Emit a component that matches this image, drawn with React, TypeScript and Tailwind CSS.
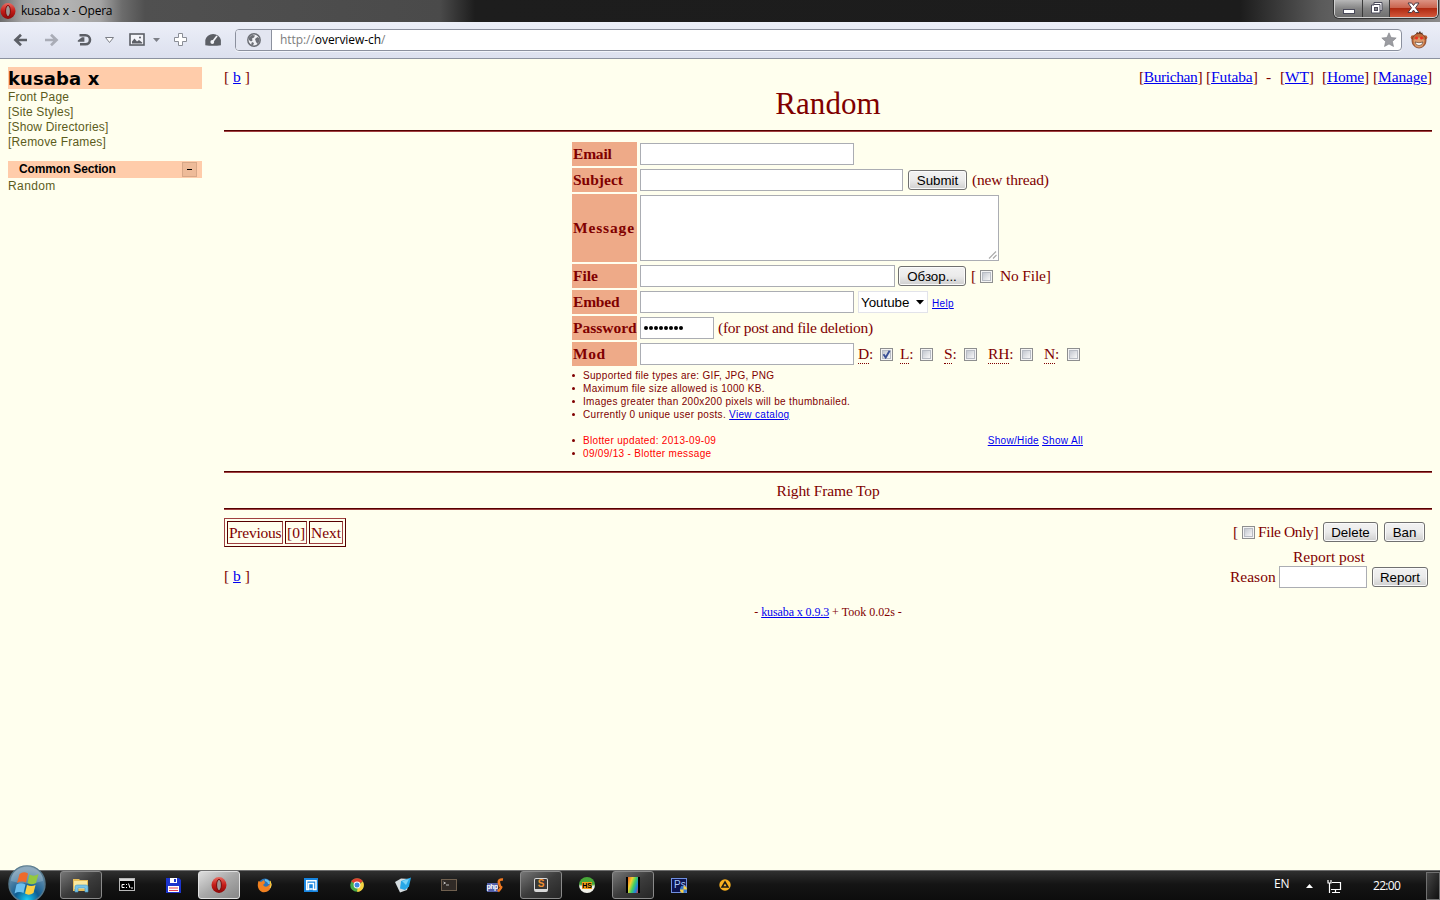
import React from "react";

const link = "text-[#0000ee] underline decoration-1 underline-offset-1";
const field = "shrink-0 rounded-none border border-[#abadb3] bg-white outline-none";

function Box({ checked = false }: { checked?: boolean }) {
  return (
    <span className="flex h-[13px] w-[13px] shrink-0 border border-[#8e8f8f] bg-[#f4f4f4] p-px">
      <span className="h-[9px] w-[9px] border border-[#b8bcc4] bg-linear-to-br from-[#c4c8d0] to-[#f8f8f8]">
        {checked && (
          <svg viewBox="0 0 9 9" className="-mt-px -ml-px h-[9px] w-[9px]">
            <path d="M1.5 4.2 L3.7 7.5 L7.6 0.8" fill="none" stroke="#3a4f96" strokeWidth="1.9" />
          </svg>
        )}
      </span>
    </span>
  );
}

function Btn({ children, className }: { children: React.ReactNode; className: string }) {
  return (
    <button
      className={
        "flex h-[20px] shrink-0 items-center justify-center rounded-[3px] border border-[#707070] bg-linear-to-b from-[#f2f2f2] from-0% via-[#ebebeb] via-50% to-[#cfcfcf] pt-px font-['Liberation_Sans',sans-serif] text-[13.33px] whitespace-nowrap text-black shadow-[inset_0_0_0_1px_#fafafa] " +
        className
      }
    >
      {children}
    </button>
  );
}

function Row({
  label,
  labelClass = "",
  tall = false,
  children,
}: {
  label: string;
  labelClass?: string;
  tall?: boolean;
  children: React.ReactNode;
}) {
  return (
    <div className={"mb-[2px] flex " + (tall ? "h-[68px]" : "h-[24px]")}>
      <div
        className={
          "mr-[3px] flex w-[65px] shrink-0 items-center bg-[#eeaa88] pl-px text-[15.5px] font-bold whitespace-nowrap " +
          labelClass
        }
      >
        {label}
      </div>
      <div className="flex items-center whitespace-nowrap">{children}</div>
    </div>
  );
}

function Rule() {
  return <div className="h-[2px] shrink-0 border-t border-b border-t-[#560000] border-b-[#a04040]" />;
}

function Flag({ text, className }: { text: string; className: string }) {
  return (
    <span className={"flex h-[20px] shrink-0 items-start leading-[20px] tracking-[-0.2px] " + className}>
      <span className="h-[20px] border-b border-dotted border-[#800000]">{text}</span>:
    </span>
  );
}

function Bullet({ children, red = false }: { children: React.ReactNode; red?: boolean }) {
  return (
    <li className="flex h-[13px] items-center whitespace-nowrap">
      <span className="mr-[8px] h-[3px] w-[3px] rounded-full bg-[#800000]" />
      <span className={red ? "text-[#ff0000]" : ""}>{children}</span>
    </li>
  );
}

function OperaIcon({ size }: { size: number }) {
  return (
    <svg width={size} height={size} viewBox="0 0 16 16">
      <defs>
        <linearGradient id="op" x1="0" y1="0" x2="0" y2="1">
          <stop offset="0" stopColor="#e86a60" />
          <stop offset="0.5" stopColor="#c41c18" />
          <stop offset="1" stopColor="#8c0808" />
        </linearGradient>
      </defs>
      <ellipse cx="8" cy="8" rx="7.5" ry="7.9" fill="url(#op)" />
      <ellipse cx="8" cy="8" rx="2.4" ry="5.6" fill="#a09896" stroke="#7c0a0a" strokeWidth="1" />
    </svg>
  );
}

function TitleBar() {
  return (
    <header className="flex h-[22px] shrink-0 justify-between bg-[linear-gradient(90deg,#6c6c6c_0px,#a4a4a4_22px,#b6b6b6_60px,#a4a4a4_100px,#6c6c6c_122px,#505050_145px,#4a4a4a_440px,#1d1d1d_475px,#1c1c1c_1240px,#5a5a5a_1320px,#8a8a8a_1440px)]">
      <div className="flex items-center">
        <OperaIcon size={16} />
        <span className="ml-[5px] font-['Open_Sans',sans-serif] text-[12px] tracking-[-0.2px] text-black">kusaba x - Opera</span>
      </div>
      <div className="mr-[2px] flex h-[18px] overflow-hidden rounded-b-[5px] border border-t-0 border-[#d0d0d0] shadow-[0_0_0_1px_#333]">
        <div className="flex w-[28px] items-center justify-center border-r border-[#3a3a3a] bg-linear-to-b from-[#b8b8b8] via-[#858585] to-[#6f6f6f]">
          <svg width="12" height="16"><rect x="0.5" y="8.5" width="11" height="4" fill="#fff" stroke="#4a4a5a" /></svg>
        </div>
        <div className="flex w-[27px] items-center justify-center border-r border-[#3a3a3a] bg-linear-to-b from-[#b8b8b8] via-[#858585] to-[#6f6f6f]">
          <svg width="13" height="14" className="mb-[2px]">
            <path d="M4 1.5h8v8h-2v2.500H1.5v-8H4z" fill="#fff" stroke="#4a4a5a" />
            <path d="M4 3.500h6v6" fill="none" stroke="#4a4a5a" />
            <rect x="4.500" y="6.500" width="3" height="3" fill="#888" stroke="#4a4a5a" />
          </svg>
        </div>
        <div className="flex w-[47px] items-center justify-center bg-[linear-gradient(180deg,#dc9384_0%,#c9614c_48%,#b02a12_50%,#d2573a_100%)]">
          <svg width="13" height="12" viewBox="0 0 13 12" className="mb-[2px]">
            <path d="M1 1h3.6l1.9 2.5L8.4 1H12L8.5 5.8 12 10.5H8.4L6.5 8.1l-1.9 2.4H1l3.5-4.7z" fill="#fff" stroke="#4c3c46" />
          </svg>
        </div>
      </div>
    </header>
  );
}

function Toolbar() {
  return (
    <div className="flex h-[37px] shrink-0 items-center border-b border-[#8c92a0] bg-linear-to-b from-[#eceff8] to-[#dce0ee]">
      <svg width="235" height="36" viewBox="0 22 235 36" className="shrink-0">
        <path d="M21 34.800L15.500 40l5.500 5.200M15.500 40H27" fill="none" stroke="#5c5f66" strokeWidth="2.700" />
        <path d="M51 34.800l5.500 5.200-5.500 5.200M56.500 40H45" fill="none" stroke="#a9acb6" strokeWidth="2.700" />
        <path d="M79.500 35.300h6a4.500 4.500 0 1 1 0 9h-5.500" fill="none" stroke="#5c5f66" strokeWidth="2.600" />
        <path d="M77.800 41.800v-1.300l4.200-3.300h2.400v4.600z" fill="#5c5f66" />
        <path d="M105.500 37.500h8l-4 5z" fill="#fff" stroke="#7c7f87" />
        <rect x="130" y="34" width="14" height="11" fill="#f3f4f9" stroke="#5c5f66" strokeWidth="1.6" />
        <path d="M132 43.500v-2l2.500-3 2.500 3 2-1.500 3.200 2.500v1z" fill="#5c5f66" />
        <circle cx="140" cy="37.500" r="1" fill="#5c5f66" />
        <path d="M153 38h7l-3.500 4z" fill="#7c7f87" />
        <path d="M178.500 33.500h4v4h4v4h-4v4h-4v-4h-4v-4h4z" fill="#fff" stroke="#8b8e96" />
        <path d="M205.300 45.300V40a7.900 7 0 0 1 15.600 0v5.300q-7.800 1-15.600 0z" fill="#5c5f66" />
        <path d="M212 42.500l5-6.500" stroke="#f3f4f9" strokeWidth="1.700" />
        <circle cx="212.300" cy="42" r="1.900" fill="#f3f4f9" />
      </svg>
      <div className="flex h-[22px] w-[1167px] shrink-0 overflow-hidden rounded-[4px] border border-[#8b909e] bg-white shadow-[0_1px_0_#f2f4fa]">
        <div className="flex w-[36px] shrink-0 items-center justify-center border-r border-[#8b909e] bg-[#e3e6f1]">
          <svg width="14" height="14" viewBox="0 0 14 14">
            <circle cx="7" cy="7" r="6.200" fill="#f0f1f5" stroke="#6c6f76" strokeWidth="1.500" />
            <path d="M2 4.500l3-2.500 3 .5-1 2-2 1 .5 2L4 8.500 2 7zM8 6l2.500-2 2 1.500v3L10.500 11 9 9zM5 9l2 1-1 2.500-2-1z" fill="#6c6f76" />
          </svg>
        </div>
        <span className="ml-[8px] w-[1101px] shrink-0 self-center font-['Open_Sans',sans-serif] text-[12px] tracking-[-0.06px] text-[#7d7d7d]">
          http://<span className="text-black">overview-ch</span>/
        </span>
        <svg width="16" height="16" viewBox="0 0 16 16" className="mt-[2px] shrink-0">
          <path d="M8 .8l2.100 4.700 5.100.5-3.800 3.500 1.100 5L8 12l-4.500 2.500 1.100-5L.8 6l5.100-.5z" fill="#9b9ca1" stroke="#808187" strokeWidth=".6" />
        </svg>
      </div>
      <svg width="18" height="18" viewBox="0 0 18 18" className="ml-[8px]">
        <path d="M6 3l1-2 1.500 1L10 0l1 2 1.500-.5V4z" fill="#4c2c1a" />
        <circle cx="3" cy="6.500" r="2.300" fill="#b45c30" />
        <circle cx="15" cy="6.500" r="2.300" fill="#b45c30" />
        <ellipse cx="9" cy="9.700" rx="7" ry="7.300" fill="#c06a3a" stroke="#7c3c20" strokeWidth=".8" />
        <path d="M3.500 9q5.500-5 11 0-.5 7.500-5.500 7.500T3.500 9" fill="#dc9c6c" />
        <circle cx="6.500" cy="7" r="1.500" fill="#f03020" />
        <circle cx="11.500" cy="7" r="1.500" fill="#f03020" />
        <path d="M5 11q4 1.500 8 0-.5 3.500-4 3.500T5 11" fill="#fff" stroke="#4a2818" strokeWidth=".6" />
      </svg>
    </div>
  );
}

function Sidebar() {
  return (
    <aside className="w-[224px] shrink-0 pt-[8px] pl-[8px] font-['Liberation_Sans',sans-serif] text-[12px] leading-[15px] text-[#5c5c1c]">
      <h1 className="flex h-[22px] w-[194px] items-center bg-[#ffccaa] font-['DejaVu_Sans',sans-serif] text-[18px] font-bold tracking-[0.1px] text-black">
        kusaba x
      </h1>
      <div className="pt-px tracking-[0.17px]">
        <div>Front Page</div>
        <div>[Site Styles]</div>
        <div>[Show Directories]</div>
        <div>[Remove Frames]</div>
      </div>
      <h2 className="mt-[11px] flex h-[17px] w-[194px] items-center justify-between bg-[#ffccaa] pr-[5px] pl-[11px] font-bold tracking-[-0.14px] text-black">
        Common Section
        <span className="flex h-[15px] w-[15px] items-center justify-center border border-[#d8a888] bg-[#eebb99]">
          <span className="mb-px h-px w-[5px] bg-black" />
        </span>
      </h2>
      <div className="pt-px tracking-[0.4px]">Random</div>
    </aside>
  );
}

function Main() {
  return (
    <main className="w-[1208px] shrink-0 pt-[8px] font-['Liberation_Serif',serif] text-[15.5px] leading-[20px] text-[#800000]">
      <div className="flex h-[20px] justify-between whitespace-pre">
        <span>[ <a className={link}>b</a> ]</span>
        <span className="flex">
          <span className="w-[67px] tracking-[-0.4px]">[<a className={link}>Burichan</a>]</span>
          <span className="w-[60px] tracking-[-0.1px]">[<a className={link}>Futaba</a>]</span>
          <span className="w-[14px]">-</span>
          <span className="w-[42px] tracking-[-0.2px]">[<a className={link}>WT</a>]</span>
          <span className="w-[51px] tracking-[-0.2px]">[<a className={link}>Home</a>]</span>
          <span className="w-[59px] tracking-[-0.15px]">[<a className={link}>Manage</a>]</span>
        </span>
      </div>
      <h1 className="h-[43px] text-center text-[31px] leading-[34px] tracking-[0.1px]">Random</h1>
      <Rule />
      <form className="mt-[10px] ml-[348px]" onSubmit={(e) => e.preventDefault()}>
        <Row label="Email" labelClass="tracking-[-0.2px]"><input className={field + " h-[22px] w-[214px]"} /></Row>
        <Row label="Subject">
          <input className={field + " h-[22px] w-[263px]"} />
          <Btn className="mr-[5px] ml-[5px] w-[59px]">Submit</Btn>
          <span className="tracking-[-0.16px]">(new thread)</span>
        </Row>
        <Row label="Message" labelClass="tracking-[0.85px]" tall>
          <div className={field + " flex h-[66px] w-[359px] items-end justify-end"}>
            <svg width="10" height="10"><path d="M1 8.500l7-7M5 8.500l3.500-3.500" stroke="#a8a8a8" strokeWidth="1.100" /></svg>
          </div>
        </Row>
        <Row label="File">
          <input className={field + " h-[22px] w-[255px]"} />
          <Btn className="mr-[5px] ml-[3px] w-[68px]">Обзор...</Btn>
          <span className="w-[9px]">[</span>
          <Box />
          <span className="ml-[7px] tracking-[-0.16px]">No File]</span>
        </Row>
        <Row label="Embed" labelClass="tracking-[-0.2px]">
          <input className={field + " h-[22px] w-[214px]"} />
          <div className="ml-[4px] flex h-[22px] w-[70px] items-center justify-between border border-[#e2e3ea] bg-white pt-px pr-[3px] pl-[2px] font-['Liberation_Sans',sans-serif] text-[13.33px] text-black">
            Youtube
            <svg width="8" height="5"><path d="M0 0h8L4 4.500z" fill="#000" /></svg>
          </div>
          <a className={link + " mt-[3px] ml-[4px] font-['Liberation_Sans',sans-serif] text-[10px] tracking-[0.3px]"}>Help</a>
        </Row>
        <Row label="Password">
          <div className={field + " mr-[4px] flex h-[22px] w-[74px] items-center gap-px pl-[3px]"}>
            {[0, 1, 2, 3, 4, 5, 6, 7].map((i) => (
              <span key={i} className="flex h-[4px] w-[4px] items-center">
                <span className="h-[3.500px] w-[3.500px] rounded-full bg-black" />
              </span>
            ))}
          </div>
          <span className="tracking-[-0.28px]">(for post and file deletion)</span>
        </Row>
        <Row label="Mod" labelClass="tracking-[0.6px]">
          <input className={field + " mr-[4px] h-[22px] w-[214px]"} />
          <Flag text="D" className="w-[22px]" /><Box checked />
          <Flag text="L" className="ml-[7px] w-[20px]" /><Box />
          <Flag text="S" className="ml-[11px] w-[20px]" /><Box />
          <Flag text="RH" className="ml-[11px] w-[32px]" /><Box />
          <Flag text="N" className="ml-[11px] w-[23px]" /><Box />
        </Row>
        <ul className="mt-[3px] w-[511px] font-['Liberation_Sans',sans-serif] text-[10px] leading-[13px] tracking-[0.32px]">
          <Bullet>Supported file types are: GIF, JPG, PNG</Bullet>
          <Bullet>Maximum file size allowed is 1000 KB.</Bullet>
          <Bullet>Images greater than 200x200 pixels will be thumbnailed.</Bullet>
          <Bullet>Currently 0 unique user posts. <a className={link}>View catalog</a></Bullet>
          <li className="mt-[13px] flex justify-between">
            <ul><Bullet red>Blotter updated: 2013-09-09</Bullet></ul>
            <span><a className={link}>Show/Hide</a> <a className={link}>Show All</a></span>
          </li>
          <Bullet red>09/09/13 - Blotter message</Bullet>
        </ul>
      </form>
      <div className="mt-[11px]"><Rule /></div>
      <div className="h-[35px] pt-[8px] text-center tracking-[-0.16px]">Right Frame Top</div>
      <Rule />
      <div className="mt-[8px] flex justify-between">
        <div>
          <div className="flex h-[29px] w-[122px] gap-[2px] border border-t-[#a04040] border-r-[#560000] border-b-[#560000] border-l-[#a04040] p-[2px] leading-[22px]">
            <span className="w-[56px] border border-t-[#560000] border-r-[#a04040] border-b-[#a04040] border-l-[#560000] pl-px tracking-[-0.25px]">Previous</span>
            <span className="w-[22px] border border-t-[#560000] border-r-[#a04040] border-b-[#a04040] border-l-[#560000] pl-px">[0]</span>
            <span className="w-[34px] border border-t-[#560000] border-r-[#a04040] border-b-[#a04040] border-l-[#560000] pl-px">Next</span>
          </div>
          <div className="mt-[19px] whitespace-pre">[ <a className={link}>b</a> ]</div>
        </div>
        <div className="mr-[4px] flex w-[200px] flex-col whitespace-nowrap">
          <div className="mt-[3px] flex h-[22px] items-center pl-[5px]">
            <span className="w-[9px]">[</span><Box />
            <span className="ml-[3px] w-[65px] tracking-[-0.4px]">File Only]</span>
            <Btn className="w-[55px]">Delete</Btn>
            <Btn className="ml-[6px] w-[41px]">Ban</Btn>
          </div>
          <div className="mt-[4px] h-[19px] pl-[65px] leading-[19px]">Report post</div>
          <div className="flex h-[22px] items-center pl-[2px]">
            <span className="w-[49px]">Reason</span>
            <input className={field + " h-[22px] w-[88px]"} />
            <Btn className="ml-[5px] w-[56px]">Report</Btn>
          </div>
        </div>
      </div>
      <div className="mt-[14px] text-center text-[12px]">
        - <a className={link + " tracking-[-0.1px]"}>kusaba x 0.9.3</a> + Took 0.02s -
      </div>
    </main>
  );
}

function Task({ children, mode = "idle" }: { children: React.ReactNode; mode?: "idle" | "open" | "active" }) {
  const look = {
    idle: "border-transparent",
    open: "border-[#8a8a8a] bg-linear-to-br from-[#777777] via-[#3c3c3c] to-[#262626]",
    active: "border-[#e0e0e0] bg-linear-to-br from-[#dedede] via-[#a8a8a8] to-[#878787]",
  }[mode];
  return (
    <div className={"mr-[4px] flex h-[28px] w-[42px] shrink-0 items-center justify-center rounded-[3px] border " + look}>{children}</div>
  );
}

function Taskbar() {
  return (
    <footer className="relative flex h-[30px] shrink-0 items-start border-t border-[#6e6e6e] bg-linear-to-b from-[#303030] via-[#151515] via-45% to-[#0d0d0d] pl-[60px]">
      <svg className="absolute -top-[7px] left-[7px]" width="40" height="38" viewBox="0 0 40 38">
        <defs>
          <radialGradient id="orb" cx=".5" cy=".95" r=".85">
            <stop offset="0" stopColor="#18d0f8" />
            <stop offset=".4" stopColor="#0f5c92" />
            <stop offset="1" stopColor="#7898b0" />
          </radialGradient>
        </defs>
        <circle cx="20" cy="20" r="18" fill="url(#orb)" stroke="#55788c" strokeWidth="1.500" />
        <path d="M4 17a16 15 0 0 1 32 0q-16 5-32 0" fill="#d4e4ec" opacity=".25" />
        <path d="M12.500 10q4-3 8.500-.5l-2 9q-4.500-2-9 .5z" fill="#ee6a2c" />
        <path d="M22.500 10.500q4.500 2.500 9-.5l-2.500 9q-4.500 2.500-8.500 0z" fill="#94c840" />
        <path d="M9.500 20.500q4.500-2.500 9 0l-2 8.500q-4.500-2-9 .5z" fill="#6cc0f0" />
        <path d="M20 21q4.500 2 8.500 0l-2 8q-4.500 3-8.500.5z" fill="#fcd044" />
      </svg>
      <Task mode="open">
        <svg width="18" height="16"><path d="M1 2h6l1 1h8v11H1z" fill="#e6bd58" /><path d="M2 4h13v8H2z" fill="#fae9a0" /><path d="M3 15V10q0-2 2-2h9q2 0 2 2v5h-3v-4H6v4z" fill="#78c4e8" stroke="#4898c0" strokeWidth=".6" /></svg>
      </Task>
      <Task>
        <svg width="17" height="14"><rect x=".5" y=".5" width="15" height="12" fill="#000" stroke="#b8b8b8" /><path d="M1 2h14" stroke="#d8d8d8" strokeWidth="2" /><path d="M5.500 6.500H3v3h2.500M7.500 6v1m0 2v1M9.500 5.500l1.500 4.500m1 0h2" fill="none" stroke="#fff" /></svg>
      </Task>
      <Task>
        <svg width="15" height="15"><path d="M0 0h13l2 2v13H0z" fill="#1c34cc" /><path d="M4 0h7v5H4z" fill="#fff" /><path d="M8 1h2v3H8z" fill="#1c34cc" /><path d="M2 8h11v6H2z" fill="#fff" /><path d="M3 10h9M3 12.500h9" stroke="#e04050" /></svg>
      </Task>
      <Task mode="active"><OperaIcon size={16} /></Task>
      <Task>
        <svg width="16" height="16"><circle cx="8" cy="8" r="6.500" fill="#2c74b8" /><path d="M8 3q4 1 4 4" stroke="#68c0e8" strokeWidth="2" fill="none" /><path d="M1.500 4L4 5l3-2 1 3-2 2q2 3 5 1t2-6q3 5 0 9t-8 3Q-1 12 1.500 4" fill="#f08020" /><path d="M13 4q2 4 0 7" stroke="#f8d840" fill="none" /></svg>
      </Task>
      <Task>
        <svg width="14" height="14"><path d="M0 0h14v14H0z" fill="#1684e0" /><path d="M2 11.500h2.500V5.500h5v6H12V2.800H2.700v8M5.500 11h3" fill="none" stroke="#fff" strokeWidth="1.500" /></svg>
      </Task>
      <Task>
        <svg width="14" height="14" viewBox="0 0 14 14"><circle cx="7" cy="7" r="6.800" fill="#48a848" /><path d="M1.200 3.400A6.800 6.800 0 0 1 12.900 3.600L7 7z" fill="#e04030" /><path d="M12.900 3.600A6.800 6.800 0 0 1 7 13.800l1-6z" fill="#f8d040" /><circle cx="7" cy="7" r="3.400" fill="#fff" /><circle cx="7" cy="7" r="2.500" fill="#4088e0" /></svg>
      </Task>
      <Task>
        <svg width="17" height="16"><path d="M0 5l6-3.500 9 .5-3 11-7 2.500z" fill="#d4dce0" /><path d="M6 4l10-3.500-2 9-4 3.500-5-1.500z" fill="#28a8e8" /><path d="M7 4l7-2-3 6z" fill="#78d4f8" /></svg>
      </Task>
      <Task>
        <svg width="16" height="13"><rect x=".5" y=".5" width="15" height="11" fill="#302a26" stroke="#70604f" /><path d="M2.500 3l2 1-2 1M5 6h3" stroke="#ddd" strokeWidth=".8" fill="none" /></svg>
      </Task>
      <Task>
        <div className="relative h-[15px] w-[17px]">
          <span className="absolute bottom-[1px] left-0 h-[9px] w-[11px] bg-[#5460a8] text-center font-['Liberation_Sans',sans-serif] text-[7px] leading-[8px] font-bold tracking-[-0.5px] text-white">php</span>
          <svg className="absolute top-0 right-0" width="7" height="15"><path d="M6 1.500Q1 1 2 5t2 4-3 4.500" fill="none" stroke="#f07820" strokeWidth="2.600" /></svg>
        </div>
      </Task>
      <Task mode="open">
        <span className="flex h-[14px] w-[14px] items-start justify-center rounded-[2px] border border-b-3 border-[#d8d8d8] bg-[#383838] font-['Liberation_Sans',sans-serif] text-[10px] leading-[10px] font-bold text-[#f09030]">S</span>
      </Task>
      <Task>
        <span className="flex h-[16px] w-[16px] items-center justify-center rounded-full bg-linear-to-b from-[#48a838] from-45% to-[#f0f0e8] to-60%">
          <span className="h-[7px] w-[10px] bg-[#f8a018] text-center font-['Liberation_Sans',sans-serif] text-[7px] leading-[7px] font-bold text-black">HS</span>
        </span>
      </Task>
      <Task mode="open">
        <span className="h-[16px] w-[14px] border-x-2 border-black bg-[linear-gradient(110deg,#f06020,#f0d030_30%,#40d060_55%,#2080e0_80%,#d04040)]" />
      </Task>
      <Task>
        <span className="relative h-[15px] w-[16px] border border-[#7090e0] bg-[#0c1450] pl-[2px] font-['Liberation_Sans',sans-serif] text-[10px] leading-[12px] text-[#a8c8f8]">
          Ps
          <svg className="absolute -right-px -bottom-px" width="7" height="7" viewBox="0 0 8 8"><circle cx="4" cy="4" r="4" fill="#3878d0" /><path d="M4 0a4 4 0 0 1 4 4H0a4 4 0 0 0 4 4z" fill="#f8d048" /></svg>
        </span>
      </Task>
      <Task>
        <svg width="14" height="14"><circle cx="7" cy="7" r="5.700" fill="#f8b020" /><path d="M7 4l3 5H4z" fill="none" stroke="#181818" strokeWidth="1.500" /></svg>
      </Task>
      <div className="ml-auto flex h-[29px] items-center font-['Open_Sans',sans-serif] text-[12px] text-white">
        <span className="mb-[4px] ml-px w-[32px] text-[12px] tracking-[-0.2px]">EN</span>
        <svg width="7" height="4" className="mt-[1px] mr-[14px]"><path d="M3.500 0L7 4H0z" fill="#fff" /></svg>
        <svg width="15" height="15" className="mt-[1px] mr-[31px]"><path d="M5 3.500h8.500v7H4M8.500 11v2M5 13.500h8M1 1v3h3V1M2.500 4v10" fill="none" stroke="#fff" strokeWidth="1.200" /></svg>
        <span className="w-[53px] tracking-[-0.7px]">22:00</span>
        <span className="h-[28px] w-[14px] border border-[#707070] bg-linear-to-br from-[#484848] to-[#101010]" />
      </div>
    </footer>
  );
}

export default function App() {
  return (
    <div className="flex h-[900px] w-[1440px] flex-col overflow-hidden bg-[#ffffee]">
      <TitleBar />
      <Toolbar />
      <div className="flex min-h-0 flex-1">
        <Sidebar />
        <Main />
      </div>
      <Taskbar />
    </div>
  );
}
